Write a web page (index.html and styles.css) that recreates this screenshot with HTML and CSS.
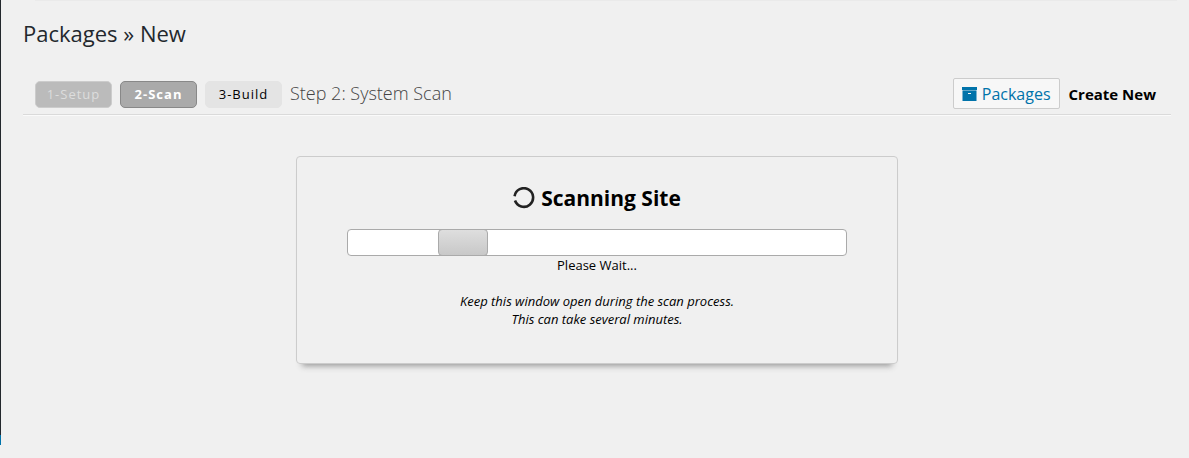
FILE: index.html
```html
<!DOCTYPE html>
<html lang="en">
<head>
<meta charset="utf-8">
<title>Packages » New</title>
<link rel="stylesheet" href="styles.css">
</head>
<body>
<div class="layout">
  <div class="menu-edge"></div>
  <main class="content">
    <div class="top-rule"></div>
    <h1 class="title">Packages » New</h1>
    <div class="toolbar">
      <ol class="steps">
        <li class="step step-done">1-Setup</li>
        <li class="step step-active" aria-current="step">2-Scan</li>
        <li class="step">3-Build</li>
      </ol>
      <h2 class="step-title">Step 2: System Scan</h2>
      <nav class="actions">
        <a class="packages" href="#">
          <svg class="icon" viewBox="0 0 16 14" aria-hidden="true"><path fill="#0073aa" d="M0 0h15v3H0z"/><path fill="#0073aa" fill-rule="evenodd" d="M0.500 4h14v10H0.500zM6 6v1h3V6z"/><path fill="#0073aa" fill-opacity=".6" d="M0.500 3h14v1H0.500z"/></svg>
          <span>Packages</span>
        </a>
        <span class="current">Create New</span>
      </nav>
    </div>
    <section class="panel">
      <h2 class="panel-title">
        <svg class="spinner" viewBox="0 0 22 22" aria-hidden="true"><path fill="none" stroke="#222" stroke-width="2.6" d="M1.600 9.200A9.300 9.300 0 1 1 2 13.500"/></svg>
        <span>Scanning Site</span>
      </h2>
      <div class="progress" role="progressbar" aria-label="Scanning Site"><div class="progress-chunk"></div></div>
      <p class="wait">Please Wait...</p>
      <p class="note">Keep this window open during the scan process.<br>This can take several minutes.</p>
    </section>
  </main>
</div>
</body>
</html>
```
FILE: styles.css
```css
* { box-sizing: border-box; }
body {
  margin: 0;
  background: #f0f0f0;
  color: #000;
  font: 13px/18px "Open Sans", "Noto Sans", sans-serif;
}
h1, h2, p, ol { margin: 0; padding: 0; }
.layout { display: flex; align-items: flex-start; }
.menu-edge {
  width: 1px;
  height: 445px;
  background: #23282d;
  border-bottom: 10px solid #0073aa;
}
.content { flex: 1; padding: 0 18px 0 22px; }
.top-rule { height: 1px; margin: 0 -6px 0 12px; background: #eaeaea; }
.title {
  padding-top: 18px;
  color: #23282d;
  font-size: 22px;
  font-weight: 400;
  line-height: 29px;
}
.toolbar {
  display: flex;
  align-items: center;
  margin-top: 30px;
  padding: 0 15px 5px 12px;
  border-bottom: 1px solid #dadada;
  box-shadow: 0 1px 0 #fafafa;
}
.steps { display: flex; gap: 8px; margin-top: 2px; list-style: none; }
.step {
  width: 77px;
  height: 27px;
  border: 1px solid #e4e4e4;
  border-radius: 5px;
  background: #e4e4e4;
  font-size: 13px;
  line-height: 25px;
  letter-spacing: 1px;
  text-align: center;
}
.step-done { border-color: #ccc; background: #bbb; color: #ddd; }
.step-active { border-color: #888; background: #aaa; color: #fff; font-weight: 700; }
.step-title {
  margin: 0 0 2px 8px;
  color: #444;
  font-size: 18px;
  font-weight: 300;
  line-height: 24px;
}
.actions { display: flex; align-items: center; gap: 9px; margin-left: auto; }
.packages {
  display: flex;
  align-items: center;
  gap: 4px;
  height: 31px;
  padding: 0 8px;
  border: 1px solid #ccc;
  border-radius: 2px;
  background: #f7f7f7;
  color: #0073aa;
  font-size: 16px;
  text-decoration: none;
}
.icon { width: 16px; height: 14px; }
.current { font-size: 15px; font-weight: 700; }
.panel {
  max-width: 602px;
  margin: 41px auto 0;
  padding: 27px 50px 35px;
  border: 1px solid #ccc;
  border-radius: 4px;
  box-shadow: 0 8px 6px -6px #999;
  text-align: center;
}
.panel-title {
  display: flex;
  align-items: center;
  justify-content: center;
  gap: 6px;
  font-size: 21px;
  line-height: 28px;
}
.spinner { width: 22px; height: 22px; }
.progress {
  display: flex;
  height: 27px;
  margin-top: 17px;
  padding-left: 18%;
  border: 1px solid #aaa;
  border-radius: 4px;
  background: #fff;
}
.progress-chunk {
  width: 50px;
  margin: -1px 0;
  border: 1px solid #aaa;
  border-radius: 4px;
  background: linear-gradient(#dedede, #c8c8c8);
}
.note { margin-top: 18px; font-style: italic; }
```
